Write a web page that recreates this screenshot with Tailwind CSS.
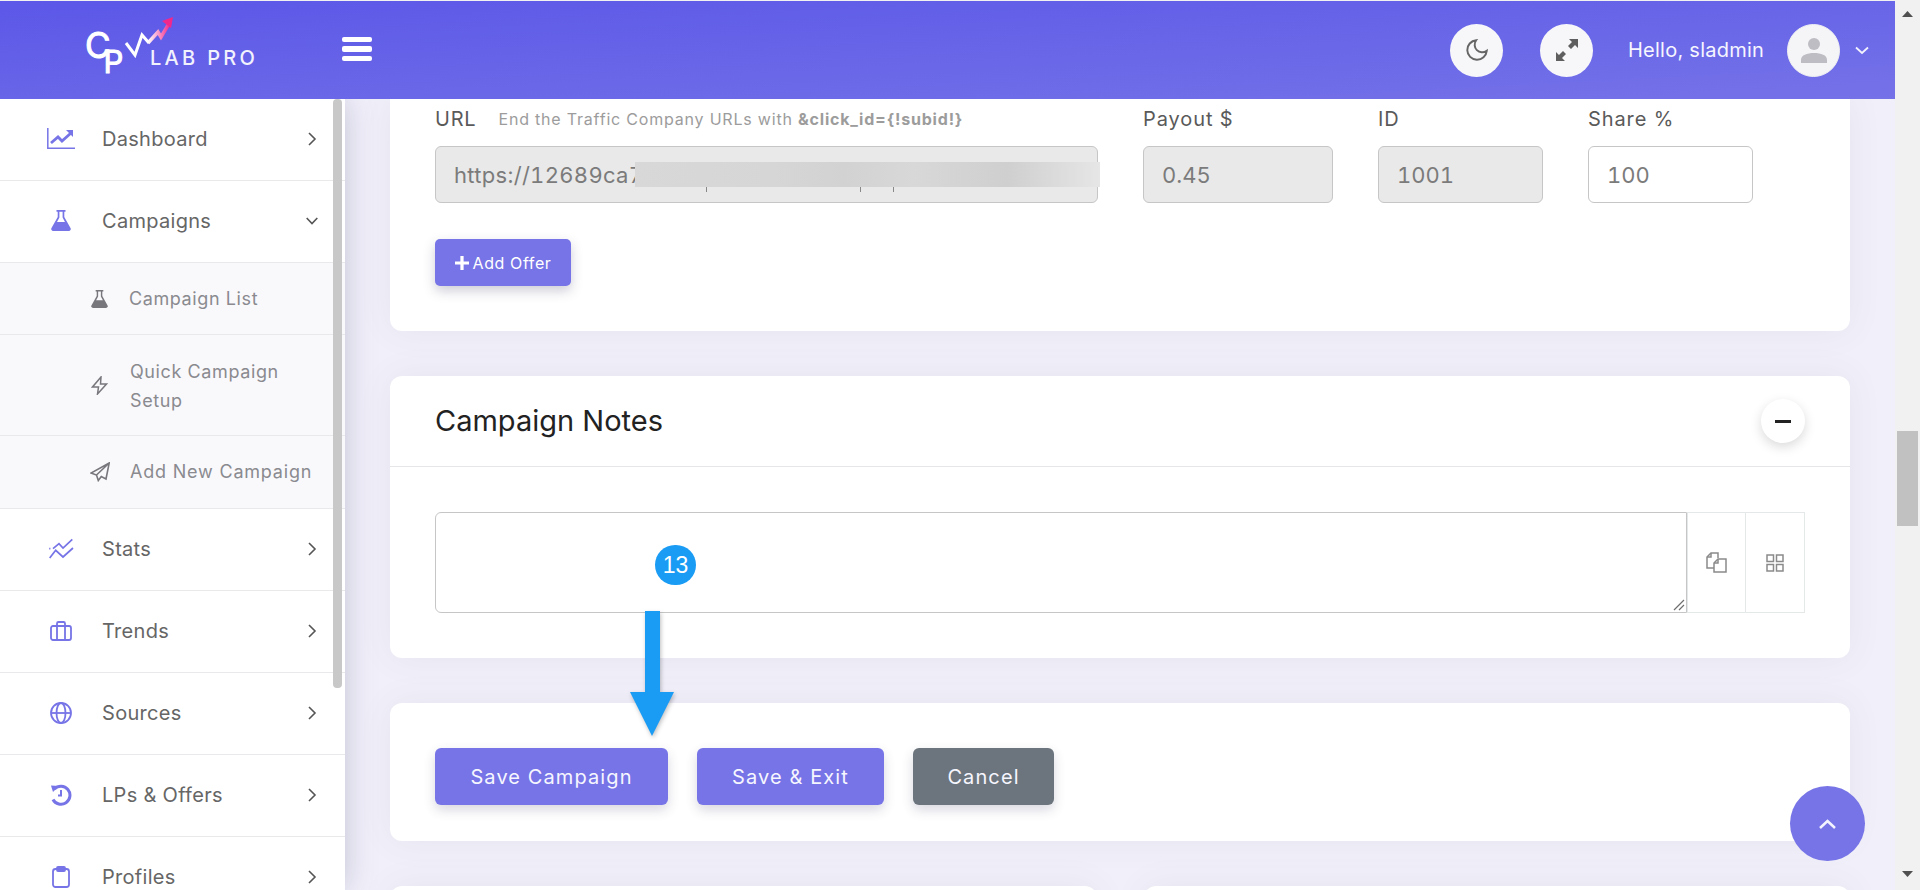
<!DOCTYPE html>
<html lang="en">
<head>
<meta charset="utf-8">
<title>CPV Lab Pro</title>
<script src="https://cdn.jsdelivr.net/npm/@tailwindcss/browser@4"></script>
</head>
<body class="m-0 bg-white font-['Inter','Liberation_Sans',sans-serif]">
<div class="relative flex h-[890px] w-[1920px] overflow-hidden pt-px bg-[#f1f1f1]">
  <div class="flex w-[1895px] flex-col">
    <header class="relative z-20 flex h-[98px] shrink-0 items-center bg-linear-to-br from-[#5c57e8] to-[#7572e8] pr-[26px]">
      <div class="w-[342px] shrink-0">
        <svg width="200" height="80" viewBox="0 0 200 80" class="ml-[70px]" fill="none">
          <defs><linearGradient id="lg" x1="0" x2="1" y1="0" y2="0"><stop offset="0" stop-color="#ffffff"/><stop offset="1" stop-color="#f0288c"/></linearGradient></defs>
          <text x="15" y="48" font-size="35" fill="#fff" stroke="#fff" stroke-width="1" font-family="Inter">C<tspan dx="-7" dy="15" font-size="31">P</tspan></text>
          <path d="M56 33L65 45 72 25 79 33" stroke="#fff" stroke-width="3"/>
          <path d="M78 33L88 22 91 27 100 12" stroke="url(#lg)" stroke-width="3.500"/>
          <path d="M92 11L103 7 101 18Z" fill="#f0288c"/>
          <text x="80" y="55" font-size="20" font-weight="500" letter-spacing="3.300" fill="#f2f2fd" font-family="Inter">LAB PRO</text>
        </svg>
      </div>
      <div class="-mt-[3px] flex w-[30px] flex-col gap-[4px]">
        <span class="h-[5px] rounded-[2px] bg-white"></span>
        <span class="h-[6px] rounded-[2px] bg-white"></span>
        <span class="h-[5px] rounded-[2px] bg-white"></span>
      </div>
      <div class="ml-auto flex items-center">
        <span class="flex h-[53px] w-[53px] items-center justify-center rounded-full bg-[#f7f7fa]">
          <svg width="26" height="26" viewBox="0 0 24 24" fill="none" stroke="#666" stroke-width="1.800"><path d="M21 12.790A9 9 0 1 1 11.210 3 7 7 0 0 0 21 12.790z"/></svg>
        </span>
        <span class="ml-[37px] flex h-[53px] w-[53px] items-center justify-center rounded-full bg-[#f7f7fa]">
          <svg width="24" height="24" viewBox="0 0 24 24" fill="#5f5f5f"><path d="M14 1h9v9l-3-3-4 4-3-3 4-4zM1 23v-9l3 3 4-4 3 3-4 4 3 3z"/></svg>
        </span>
        <span class="ml-[35px] w-[136px] whitespace-nowrap text-[20px] tracking-[0.25px] text-[#f6f6ff]">Hello, sladmin</span>
        <span class="ml-[23px] flex h-[53px] w-[53px] items-center justify-center rounded-full border border-[#efeff3] bg-[#f5f5f7]">
          <svg width="26" height="26" viewBox="0 0 26 26" fill="#bdbdc3"><circle cx="13" cy="7" r="6"/><path d="M0 26v-3c0-5 6-7 13-7s13 2 13 7v3z"/></svg>
        </span>
        <svg class="ml-[15px]" width="14" height="9" viewBox="0 0 14 9" fill="none" stroke="#f2f2fd" stroke-width="1.800"><path d="M1 1.500l6 5.500 6-5.500"/></svg>
      </div>
    </header>

    <div class="flex min-h-0 flex-1">
      <aside class="relative z-10 w-[345px] shrink-0 overflow-hidden bg-white shadow-[0_0_30px_rgba(60,60,100,0.25)]">
        <nav class="flex flex-col text-[20px] tracking-[0.3px] text-[#666]">
          <a class="flex h-[82px] items-center border-b border-[#e9e9eb] pb-[2px] pl-[47px]">
            <span class="flex w-[28px] justify-center">
              <svg width="28" height="21" viewBox="0 0 28 21" fill="none" stroke="#7674e6"><path d="M.8 0v20.200H28" stroke-width="1.500"/><path d="M4 15l7-6 4 4 9-8" stroke-width="2.800"/><path d="M19 2h7v7z" fill="#7674e6" stroke="none"/></svg>
            </span>
            <span class="ml-[27px]">Dashboard</span>
            <svg class="ml-auto mr-[28px]" width="9" height="14" viewBox="0 0 9 14" fill="none" stroke="#555" stroke-width="1.600"><path d="M1 1l6 6-6 6"/></svg>
          </a>
          <a class="flex h-[82px] items-center border-b border-[#e9e9eb] pb-[2px] pl-[47px]">
            <span class="flex w-[28px] justify-center">
              <svg width="20" height="21" viewBox="0 0 20 21" fill="#7674e6"><path d="M5.500 0h9v1.800h-1.200V7l6.200 11a2 2 0 0 1-1.800 3H2.300a2 2 0 0 1-1.800-3L6.700 7V1.800H5.500zM8.400 1.800V7.500L6 12h8l-2.400-4.500V1.800z"/></svg>
            </span>
            <span class="ml-[27px]">Campaigns</span>
            <svg class="ml-auto mr-[27px]" width="12" height="8" viewBox="0 0 12 8" fill="none" stroke="#555" stroke-width="1.600"><path d="M.7 1l5.300 5.500L11.300 1"/></svg>
          </a>
          <div class="flex flex-col bg-[#f9f9fc] text-[18px] tracking-[0.6px] text-[#8a8a8f]">
            <a class="flex h-[72px] items-center border-b border-[#e9e9eb] pl-[91px]">
              <svg class="shrink-0" width="17" height="18" viewBox="0 0 20 21" fill="#77777c"><path d="M5.500 0h9v1.800h-1.200V7l6.200 11a2 2 0 0 1-1.800 3H2.300a2 2 0 0 1-1.800-3L6.700 7V1.800H5.500zM8.400 1.800V7.500L6 12h8l-2.400-4.500V1.800z"/></svg>
              <span class="ml-[21px]">Campaign List</span>
            </a>
            <a class="flex h-[101px] items-center border-b border-[#e9e9eb] pl-[91px]">
              <svg class="shrink-0" width="17" height="19" viewBox="0 0 17 19" fill="none" stroke="#77777c" stroke-width="1.500"><path d="M10 1L1.500 11h6l-1 7L15.500 8h-6z"/></svg>
              <span class="ml-[22px] pt-[2px] leading-[29px]">Quick Campaign<br>Setup</span>
            </a>
            <a class="flex h-[73px] items-center border-b border-[#e9e9eb] pb-[1px] pl-[90px]">
              <svg class="shrink-0" width="20" height="20" viewBox="0 0 20 20" fill="none" stroke="#77777c" stroke-width="1.600"><path d="M19.200 1L1 11l5.500 2 1.800 5.500 3-4 4.700 2.500zM19.200 1L6.500 13"/></svg>
              <span class="ml-[20px] tracking-[0.8px]">Add New Campaign</span>
            </a>
          </div>
          <a class="flex h-[82px] items-center border-b border-[#e9e9eb] pb-[2px] pl-[47px]">
            <span class="flex w-[28px] justify-center">
              <svg width="25" height="21" viewBox="0 0 25 21" fill="none" stroke="#7674e6" stroke-width="1.700"><path d="M4 10.700L10 5.700l4 4.300L23.300 1.300M.7 20l6-7.700L14 19l10-9M.2 10.700h1.200"/></svg>
            </span>
            <span class="ml-[27px]">Stats</span>
            <svg class="ml-auto mr-[28px]" width="9" height="14" viewBox="0 0 9 14" fill="none" stroke="#555" stroke-width="1.600"><path d="M1 1l6 6-6 6"/></svg>
          </a>
          <a class="flex h-[82px] items-center border-b border-[#e9e9eb] pb-[2px] pl-[47px]">
            <span class="flex w-[28px] justify-center">
              <svg width="22" height="20" viewBox="0 0 22 20" fill="none" stroke="#7674e6" stroke-width="1.800"><rect x="1" y="5" width="20" height="14" rx="2"/><path d="M7 19V5M15 19V5M7 5V2.500a1.500 1.500 0 0 1 1.500-1.500h5A1.500 1.500 0 0 1 15 2.500V5"/></svg>
            </span>
            <span class="ml-[27px]">Trends</span>
            <svg class="ml-auto mr-[28px]" width="9" height="14" viewBox="0 0 9 14" fill="none" stroke="#555" stroke-width="1.600"><path d="M1 1l6 6-6 6"/></svg>
          </a>
          <a class="flex h-[82px] items-center border-b border-[#e9e9eb] pb-[2px] pl-[47px]">
            <span class="flex w-[28px] justify-center">
              <svg width="22" height="22" viewBox="0 0 22 22" fill="none" stroke="#7674e6" stroke-width="1.800"><circle cx="11" cy="11" r="10"/><ellipse cx="11" cy="11" rx="4.500" ry="10"/><path d="M1 11h20"/></svg>
            </span>
            <span class="ml-[27px]">Sources</span>
            <svg class="ml-auto mr-[28px]" width="9" height="14" viewBox="0 0 9 14" fill="none" stroke="#555" stroke-width="1.600"><path d="M1 1l6 6-6 6"/></svg>
          </a>
          <a class="flex h-[82px] items-center border-b border-[#e9e9eb] pb-[2px] pl-[47px]">
            <span class="flex w-[28px] justify-center">
              <svg width="22" height="22" viewBox="0 0 22 22" fill="none" stroke="#7674e6" stroke-width="3"><path d="M4.500 5A9 9 0 1 1 3 15.500"/><path d="M1 1.500l8 .5-6 6z" fill="#7674e6" stroke="none"/><path d="M11 6v5.500H8" stroke-width="2"/></svg>
            </span>
            <span class="ml-[27px]">LPs &amp; Offers</span>
            <svg class="ml-auto mr-[28px]" width="9" height="14" viewBox="0 0 9 14" fill="none" stroke="#555" stroke-width="1.600"><path d="M1 1l6 6-6 6"/></svg>
          </a>
          <a class="flex h-[82px] items-center pb-[2px] pl-[47px]">
            <span class="flex w-[28px] justify-center">
              <svg width="18" height="22" viewBox="0 0 18 22" fill="none" stroke="#7674e6" stroke-width="1.800"><rect x="1" y="3" width="16" height="18" rx="2.500"/><rect x="5" y="1" width="8" height="4" rx="1"/></svg>
            </span>
            <span class="ml-[27px]">Profiles</span>
            <svg class="ml-auto mr-[28px]" width="9" height="14" viewBox="0 0 9 14" fill="none" stroke="#555" stroke-width="1.600"><path d="M1 1l6 6-6 6"/></svg>
          </a>
        </nav>
        <span class="absolute right-[3px] top-0 h-[589px] w-[9px] rounded-[4px] bg-[#c8c8c8]"></span>
      </aside>

      <main class="relative min-w-0 flex-1 overflow-hidden bg-[#f1f0fa] px-[45px]">
        <section class="relative h-[232px] rounded-b-[12px] bg-white px-[45px] pt-[6px] shadow-[0_0_35px_rgba(60,60,80,0.07)]">
          <div class="flex gap-[45px] text-[#5a5a5a]">
            <div class="w-[663px]">
              <div class="flex h-[28px] items-center text-[20px] tracking-[0.8px]">URL<span class="ml-[22px] whitespace-nowrap text-[16px] tracking-[0.8px] text-[#9c9c9c]">End the Traffic Company URLs with <b class="font-bold">&amp;click_id={!subid!}</b></span></div>
              <div class="relative mt-[13px] flex h-[57px] items-center rounded-[6px] border border-[#c6c6c6] bg-[#e9e9e9] pl-[18px] pt-[2px] text-[22px] tracking-[0.3px] text-[#7b7b7b] tabular-nums">https://12689ca7
                <span class="absolute left-[199px] top-[15px] h-[25px] w-[465px] bg-[linear-gradient(90deg,#d8d8d8,#d6d6d6_30%,#d2d2d2_45%,#d8d8d8_60%,#cfcfcf_80%,#e6e6e6)]"></span>
                <span class="absolute left-[270px] top-[40px] h-[5px] w-px bg-[#888]"></span>
                <span class="absolute left-[424px] top-[40px] h-[5px] w-px bg-[#888]"></span>
                <span class="absolute left-[457px] top-[40px] h-[5px] w-px bg-[#888]"></span>
              </div>
            </div>
            <div class="w-[190px]">
              <div class="flex h-[28px] items-center text-[20px] tracking-[0.9px]">Payout $</div>
              <div class="mt-[13px] flex h-[57px] items-center rounded-[6px] border border-[#c6c6c6] bg-[#e9e9e9] pl-[18px] pt-[2px] text-[22px] text-[#7b7b7b] tabular-nums">0.45</div>
            </div>
            <div class="w-[165px]">
              <div class="flex h-[28px] items-center text-[20px] tracking-[0.8px]">ID</div>
              <div class="mt-[13px] flex h-[57px] items-center rounded-[6px] border border-[#c6c6c6] bg-[#e9e9e9] pl-[18px] pt-[2px] text-[22px] text-[#7b7b7b] tabular-nums">1001</div>
            </div>
            <div class="w-[165px]">
              <div class="flex h-[28px] items-center text-[20px] tracking-[0.9px]">Share %</div>
              <div class="mt-[13px] flex h-[57px] items-center rounded-[6px] border border-[#c6c6c6] bg-white pl-[18px] pt-[2px] text-[22px] text-[#7b7b7b] tabular-nums">100</div>
            </div>
          </div>
          <button class="mt-[36px] flex h-[47px] w-[136px] items-center justify-center gap-[4px] rounded-[5px] bg-[#7674e6] text-[16px] tracking-[0.6px] text-white shadow-[0_5px_12px_rgba(60,60,100,0.25)]">
            <svg width="14" height="14" viewBox="0 0 13 13" fill="#fff"><path d="M5 0h3v5h5v3H8v5H5V8H0V5h5z"/></svg>Add Offer
          </button>
        </section>

        <section class="mt-[45px] h-[282px] rounded-[12px] bg-white shadow-[0_0_35px_rgba(60,60,80,0.07)]">
          <div class="flex h-[91px] items-center border-b border-[#e6e6e9] px-[45px]">
            <h2 class="text-[29px] text-[#222]">Campaign Notes</h2>
            <span class="ml-auto flex h-[44px] w-[44px] items-center justify-center rounded-full bg-white shadow-[0_4px_12px_rgba(0,0,0,0.15)]"><span class="h-[3px] w-[16px] bg-[#222]"></span></span>
          </div>
          <div class="flex px-[45px] pt-[45px]">
            <div class="relative h-[101px] w-[1253px]">
              <textarea class="block h-full w-full resize-none rounded-l-[6px] border border-[#c6c6c6] bg-white"></textarea>
              <svg class="absolute bottom-[2px] right-[2px]" width="12" height="12" viewBox="0 0 12 12" fill="none" stroke="#6e6e6e" stroke-width="1.200"><path d="M1 11L11 1M6 11l5-5"/></svg>
            </div>
            <span class="flex h-[101px] w-[59px] items-center justify-center border border-[#e5e8e8]">
              <svg width="21" height="21" viewBox="0 0 21 21" fill="none" stroke="#8a8a8a" stroke-width="1.500"><path d="M8 16H1V5l4-4h7v5"/><path d="M8 11l4-4h8v13H8z"/><path d="M5 1v4H1M12 7v4H8"/></svg>
            </span>
            <span class="-ml-px flex h-[101px] w-[60px] items-center justify-center border border-[#e5e8e8]">
              <svg width="18" height="18" viewBox="0 0 18 18" fill="none" stroke="#8a8a8a" stroke-width="1.500"><rect x="1" y="1" width="6.500" height="6.500"/><rect x="10.500" y="1" width="6.500" height="6.500"/><rect x="1" y="10.500" width="6.500" height="6.500"/><rect x="10.500" y="10.500" width="6.500" height="6.500"/></svg>
            </span>
          </div>
        </section>

        <section class="mt-[45px] flex h-[138px] gap-[29px] rounded-[12px] bg-white p-[45px] shadow-[0_0_35px_rgba(60,60,80,0.07)]">
          <button class="h-[57px] w-[233px] rounded-[6px] bg-[#7674e6] text-[20px] tracking-[1.1px] text-[#f6f6ff] shadow-[0_5px_12px_rgba(60,60,100,0.2)]">Save Campaign</button>
          <button class="h-[57px] w-[187px] rounded-[6px] bg-[#7674e6] text-[20px] tracking-[1.1px] text-[#f6f6ff] shadow-[0_5px_12px_rgba(60,60,100,0.2)]">Save &amp; Exit</button>
          <button class="h-[57px] w-[141px] rounded-[6px] bg-[#6c757d] text-[20px] tracking-[1.1px] text-[#f6f6ff] shadow-[0_5px_12px_rgba(60,60,100,0.2)]">Cancel</button>
        </section>

        <div class="mt-[45px] flex gap-[47px]">
          <section class="h-[60px] flex-1 rounded-t-[12px] bg-white shadow-[0_0_35px_rgba(60,60,80,0.07)]"></section>
          <section class="h-[60px] flex-1 rounded-t-[12px] bg-white shadow-[0_0_35px_rgba(60,60,80,0.07)]"></section>
        </div>
      </main>
    </div>
  </div>

  <div class="relative z-30 flex w-[25px] shrink-0 flex-col items-center bg-[#f1f1f1]">
    <svg class="mt-[10px]" width="11" height="6" viewBox="0 0 11 6" fill="#505050"><path d="M5.500 0L11 6H0z"/></svg>
    <span class="mt-[414px] h-[95px] w-[21px] bg-[#c1c1c1]"></span>
    <svg class="mt-[345px]" width="11" height="6" viewBox="0 0 11 6" fill="#505050"><path d="M5.500 6L0 0h11z"/></svg>
  </div>

  <!-- tutorial annotation -->
  <span class="absolute left-[655px] top-[545px] z-30 flex h-[40px] w-[41px] items-center justify-center rounded-full bg-[#1a9cf5] font-['Liberation_Sans',sans-serif] text-[23px] text-white">13</span>
  <svg class="absolute left-[628px] top-[611px] z-30 drop-shadow-[1px_2px_2px_rgba(0,0,0,0.25)]" width="48" height="128" viewBox="0 0 48 128" fill="#1a9cf5"><path d="M17 0h15v81h14L24 125 2 81h15z"/></svg>

  <button class="absolute left-[1790px] top-[786px] z-30 flex h-[75px] w-[75px] items-center justify-center rounded-full bg-[#7674e6]">
    <svg width="17" height="10" viewBox="0 0 17 10" fill="none" stroke="#f4f4ff" stroke-width="2.500"><path d="M1 9l7.500-7L16 9"/></svg>
  </button>
</div>
</body>
</html>
